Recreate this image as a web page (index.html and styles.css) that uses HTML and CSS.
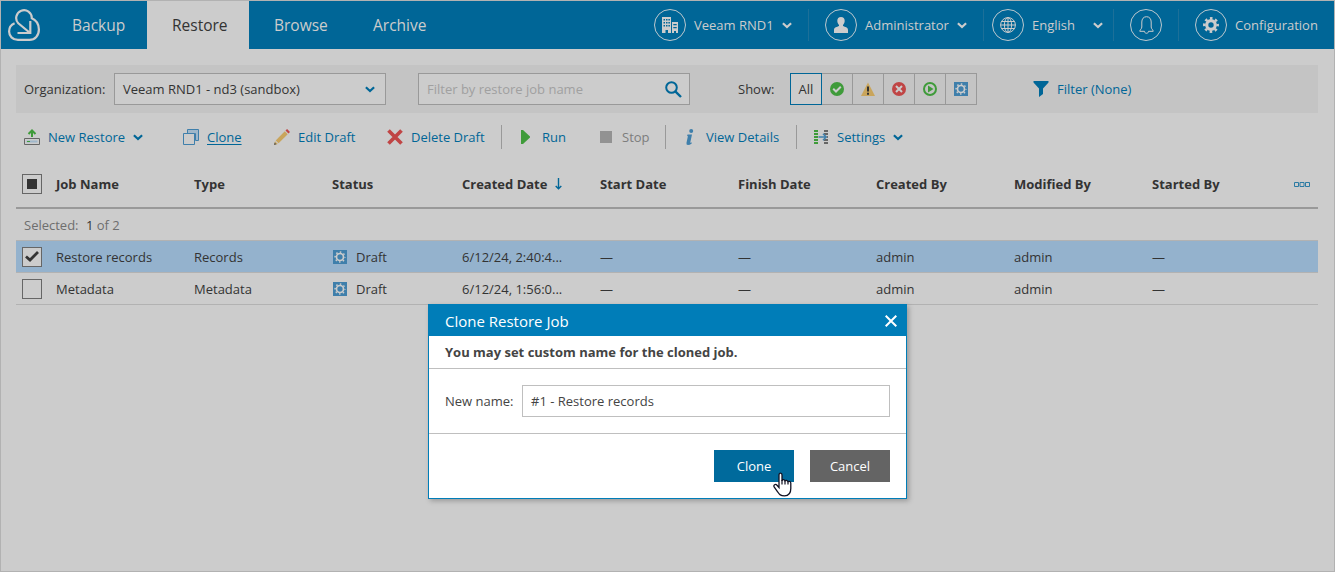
FILE: index.html
```html
<!DOCTYPE html>
<html lang="en">
<head>
  <meta charset="utf-8">
  <title>Restore</title>
  <link rel="stylesheet" href="styles.css">
</head>
<body>
  <svg class="sprite" width="0" height="0">
    <symbol id="chevron" viewBox="0 0 10 7"><path d="M0.9 1.2 L5 5 L9.1 1.2" fill="none" stroke="currentColor" stroke-width="2.2"/></symbol>
    <symbol id="draft" viewBox="0 0 14 14">
      <rect width="14" height="14" fill="#3f7fab"/>
      <circle cx="7" cy="7" r="4.9" fill="none" stroke="#ccc" stroke-width="1.5" stroke-dasharray="1.5 2.348" stroke-dashoffset="0.75"/>
      <circle cx="7" cy="7" r="3.5" fill="none" stroke="#ccc" stroke-width="1.7"/>
    </symbol>
  </svg>

  <header class="header">
    <svg class="logo" width="32" height="32" viewBox="0 0 32 32" fill="none" stroke="#ccc" stroke-width="2.2">
      <path d="M21.5 23.500 L10.300 14.300 A7.800 7.800 0 1 1 23.800 9.200 C28 11 30.900 15.500 30.900 20.500 C30.900 26.500 27 30.900 21.500 30.900 H10 C4.500 30.900 1.100 27 1.100 22.500 C1.100 19 3 15.800 6.600 14.300"/>
      <path d="M22.300 12 V24 H9.500"/>
    </svg>
    <nav class="nav">
      <a class="tab">Backup</a>
      <a class="tab active">Restore</a>
      <a class="tab browse">Browse</a>
      <a class="tab">Archive</a>
    </nav>
    <div class="menu">
      <div class="menu-item org">
        <span class="circle"><svg width="16" height="17" viewBox="0 0 16 17">
          <path d="M0 0H9V16H6V13H3.5V16H0Z M10 5H16V16H14V14H12V16H10Z" fill="#ccc"/>
          <path d="M1.5 2h1.5v1.6H1.5z M4 2h1.5v1.6H4z M6.4 2h1.5v1.6H6.4z M1.5 5h1.5v1.6H1.5z M4 5h1.5v1.6H4z M6.4 5h1.5v1.6H6.4z M1.5 8h1.5v1.6H1.5z M4 8h1.5v1.6H4z M6.4 8h1.5v1.6H6.4z M11.3 7h3.4v1.2h-3.4z M11.3 10h3.4v1.2h-3.4z" fill="#006697"/>
        </svg></span>
        <span class="menu-text">Veeam RND1</span>
        <svg class="chev" width="10" height="7"><use href="#chevron"/></svg>
      </div>
      <div class="menu-item user">
        <span class="circle"><svg width="14" height="16" viewBox="0 0 14 16"><path d="M7 0C9.4 0 10.7 1.6 10.7 3.8C10.7 5.8 9.7 7.2 9 8V9C11 10 14 10 14 13V16H0V13C0 10 3 10 5 9V8C4.300 7.200 3.300 5.800 3.300 3.800C3.300 1.600 4.600 0 7 0Z" fill="#ccc"/></svg></span>
        <span class="menu-text">Administrator</span>
        <svg class="chev" width="10" height="7"><use href="#chevron"/></svg>
      </div>
      <div class="menu-item lang">
        <span class="circle"><svg width="16" height="16" viewBox="0 0 16 16" fill="none" stroke="#ccc"><circle cx="8" cy="8" r="7.400"/><ellipse cx="8" cy="8" rx="3.600" ry="7.400"/><path d="M8 0.500V15.500M0.500 8H15.500M1.600 4.500H14.400M1.600 11.500H14.400"/></svg></span>
        <span class="menu-text">English</span>
        <svg class="chev" width="10" height="7"><use href="#chevron"/></svg>
      </div>
      <div class="menu-item bell">
        <span class="circle"><svg width="15" height="18" viewBox="0 0 15 18" fill="none" stroke="#ccc"><path d="M7.500 0.700C4.500 0.700 2.800 3 2.800 6V11C2.800 13 0.800 13.600 0.800 15.300H5.500C5.700 16.800 6.500 17.300 7.500 17.300S9.300 16.800 9.500 15.300H14.200C14.200 13.600 12.200 13 12.200 11V6C12.200 3 10.500 0.700 7.500 0.700Z"/></svg></span>
      </div>
      <div class="menu-item config">
        <span class="circle"><svg width="16" height="16" viewBox="0 0 16 16" fill="none" stroke="#ccc"><circle cx="8" cy="8" r="4.300" stroke-width="3.200"/><circle cx="8" cy="8" r="6.700" stroke-width="2.500" stroke-dasharray="2.600 2.662" stroke-dashoffset="1.300"/></svg></span>
        <span class="menu-text">Configuration</span>
      </div>
    </div>
  </header>

  <main class="content">
    <div class="filters">
      <label class="org-label">Organization:</label>
      <div class="select"><span>Veeam RND1 - nd3 (sandbox)</span><svg width="10" height="7"><use href="#chevron"/></svg></div>
      <div class="search"><span>Filter by restore job name</span>
        <svg width="17" height="17" viewBox="0 0 17 17" fill="none" stroke="#006697" stroke-width="2"><circle cx="6.500" cy="6.500" r="5.300"/><path d="M10.300 10.300L16 16" stroke-width="2.400"/></svg>
      </div>
      <span class="show-label">Show:</span>
      <div class="statuses">
        <span class="status all">All</span>
        <span class="status"><svg width="14" height="14" viewBox="0 0 14 14"><circle cx="7" cy="7" r="7" fill="#3f9b3a"/><path d="M3.200 6.800L6 9.500L10.800 4.800" fill="none" stroke="#ccc" stroke-width="2"/></svg></span>
        <span class="status"><svg width="14" height="14" viewBox="0 0 14 14"><path d="M7 0.500L14 14H0Z" fill="#c9a55c"/><path d="M7 4.500V9.500M7 10.700V12.700" stroke="#333" stroke-width="2"/></svg></span>
        <span class="status"><svg width="14" height="14" viewBox="0 0 14 14"><circle cx="7" cy="7" r="7" fill="#c04545"/><path d="M4 4L10 10M10 4L4 10" stroke="#ccc" stroke-width="2"/></svg></span>
        <span class="status"><svg width="14" height="14" viewBox="0 0 14 14"><circle cx="7" cy="7" r="6" fill="none" stroke="#3f9b3a" stroke-width="2"/><path d="M5 3.500L10.500 7L5 10.500Z" fill="#3f9b3a"/></svg></span>
        <span class="status"><svg width="14" height="14"><use href="#draft"/></svg></span>
      </div>
      <a class="filter-link"><svg width="16" height="16" viewBox="0 0 16 16"><path d="M0.500 0H15.500V1.500L10 7.500V13L6 16V7.500L0.500 1.500Z" fill="#006697"/></svg>Filter (None)</a>
    </div>

    <div class="toolbar">
      <a class="tool new-restore"><span class="ico"><svg width="16" height="16" viewBox="0 0 16 16"><path d="M0.500 9.500H15.500V15.500H0.500Z" fill="#ccc" stroke="#666"/><path d="M2.500 11.500H13.500V13.500H2.500Z" fill="#9fb7ca"/><path d="M3 12.500H6" stroke="#3f9b3a"/><path d="M8 8V2M4.500 5L8 1.500L11.500 5" fill="none" stroke="#3f9b3a" stroke-width="2"/></svg></span>New Restore<svg class="arrow" width="10" height="7"><use href="#chevron"/></svg></a>
      <a class="tool clone"><span class="ico"><svg width="16" height="16" viewBox="0 0 16 16" fill="none"><path d="M4.500 0.500H15.500V11.500H12.500V4.500H4.500Z" fill="#9fb7ca" stroke="#3f7fab"/><path d="M0.500 4.500H11.500V15.500H0.500Z" fill="#ccc" stroke="#3f7fab"/></svg></span><span class="underline">Clone</span></a>
      <a class="tool edit"><span class="ico"><svg width="16" height="16" viewBox="0 0 16 16"><path d="M10.800 2.300L13.700 5.200L4.600 14.300L1.700 11.400Z" fill="#c9a55c"/><path d="M11.500 1.600L13.100 0L16 2.900L14.400 4.500Z" fill="#c04545"/><path d="M1 12.200L3.800 15L0 16Z" fill="#c9a55c"/><path d="M0.600 13.500L2.500 15.300L0 16Z" fill="#555"/></svg></span>Edit Draft</a>
      <a class="tool delete"><span class="ico"><svg width="16" height="16" viewBox="0 0 16 16"><path d="M1.500 1.500L14.500 14.500M14.500 1.500L1.500 14.500" stroke="#c04545" stroke-width="3.700"/></svg></span>Delete Draft</a>
      <a class="tool run"><span class="ico"><svg width="16" height="16" viewBox="0 0 16 16"><path d="M3 1H5L12 7.500V8.500L5 15H3Z" fill="#3f9b3a"/></svg></span>Run</a>
      <a class="tool stop"><span class="ico"><svg width="16" height="16" viewBox="0 0 16 16"><path d="M2 2H14V14H2Z" fill="#929292"/></svg></span>Stop</a>
      <a class="tool details"><span class="ico"><svg width="16" height="16" viewBox="0 0 16 16" fill="#3f7fab"><circle cx="9.200" cy="2" r="2"/><path d="M5.500 5.500H10L8.300 13.300Q8.300 14.300 10 13.300L9.700 14.400Q7.800 16 5.900 16Q4 16 4.500 13.800L5.900 7.300L5.100 6.900Z"/></svg></span>View Details</a>
      <a class="tool settings"><span class="ico"><svg width="16" height="16" viewBox="0 0 16 16" fill="none"><path d="M3 1V15.500" stroke="#3f9b3a" stroke-width="4" stroke-dasharray="2 1"/><path d="M13 1V15.500" stroke="#666" stroke-width="4" stroke-dasharray="2 1"/><path d="M6 5H10.500L14.500 8L10.500 11H6Z" fill="#ccc"/><path d="M5.500 8H13M10 4.800L13.200 8L10 11.200" stroke="#3f7fab" stroke-width="1.500"/></svg></span>Settings<svg class="arrow" width="10" height="7"><use href="#chevron"/></svg></a>
    </div>

    <div class="grid">
      <div class="row head">
        <span class="check-cell"><span class="checkbox"><i class="partial"></i></span></span>
        <span>Job Name</span><span>Type</span><span>Status</span>
        <span>Created Date<svg class="sort" width="7" height="12" viewBox="0 0 7 12" fill="none" stroke="#006697" stroke-width="1.400"><path d="M3.500 0V10.500M0.700 7.900L3.500 10.700L6.300 7.900"/></svg></span>
        <span>Start Date</span><span>Finish Date</span><span>Created By</span><span>Modified By</span><span>Started By</span>
        <svg class="columns" width="16" height="5" viewBox="0 0 16 5" fill="none" stroke="#2c7ba3"><path d="M0.500 0.500H4.500V4.500H0.500ZM6 0.500H10V4.500H6ZM11.500 0.500H15.500V4.500H11.500Z"/></svg>
      </div>
      <div class="selected-count">Selected: <b>1</b> of 2</div>
      <div class="row selected">
        <span class="check-cell"><span class="checkbox"><svg width="14" height="11" viewBox="0 0 14 11"><path d="M1 5.500L5 9L13 1" fill="none" stroke="#333" stroke-width="2.800"/></svg></span></span>
        <span>Restore records</span><span>Records</span>
        <span><svg class="draft" width="14" height="14"><use href="#draft"/></svg>Draft</span>
        <span>6/12/24, 2:40:4...</span><span>—</span><span>—</span><span>admin</span><span>admin</span><span>—</span>
      </div>
      <div class="row">
        <span class="check-cell"><span class="checkbox"></span></span>
        <span>Metadata</span><span>Metadata</span>
        <span><svg class="draft" width="14" height="14"><use href="#draft"/></svg>Draft</span>
        <span>6/12/24, 1:56:0...</span><span>—</span><span>—</span><span>admin</span><span>admin</span><span>—</span>
      </div>
    </div>
  </main>

  <div class="dialog">
    <div class="dialog-header">Clone Restore Job
      <svg width="12" height="12" viewBox="0 0 12 12"><path d="M0.700 0.700L11.300 11.300M11.300 0.700L0.700 11.300" stroke="#fff" stroke-width="2"/></svg>
    </div>
    <div class="dialog-hint">You may set custom name for the cloned job.</div>
    <div class="dialog-body">
      <label>New name:</label>
      <div class="name-input">#1 - Restore records</div>
    </div>
    <div class="dialog-footer">
      <div class="button primary">Clone</div>
      <div class="button">Cancel</div>
    </div>
  </div>
  <svg class="cursor" width="19" height="25" viewBox="0 0 19 25"><path d="M6 15.500V3C6 0.500 9 0.500 9 3V9C9 7 12 7.200 12 9.500C12 7.700 15 8 15 10.300C15 8.800 17.800 9 17.800 11V16.500C17.800 21 15.500 23.800 11.500 23.800C7.500 23.800 6.500 22.500 4.800 20L1.300 15.200C0 13 2.500 11.500 4 13.200Z" fill="#fff" stroke="#111122" stroke-width="1.300"/><path d="M9 8V12.500M12 9V12.500M15 10V12.500" stroke="#111122" stroke-width="1.200"/></svg>
</body>
</html>
```
FILE: styles.css
```css
* {
    box-sizing: border-box;
}

body {
    margin: 0;
    height: 572px;
    overflow: hidden;
    border: 1px solid #b2b2b2;
    background: #ccc;
    color: #333;
    font-family: "Open Sans", sans-serif;
    font-size: 13px;
    line-height: 18px;
}

svg {
    display: block;
    flex: none;
}

.sprite {
    position: absolute;
}

/* header */
.header {
    display: flex;
    align-items: center;
    height: 48px;
    padding-left: 7px;
    background: #006697;
    color: #ccc;
}

.nav {
    display: flex;
    height: 48px;
    margin-left: 7px;
}

.tab {
    padding: 0 25px;
    font-size: 15.5px;
    line-height: 48px;
}

.tab.active {
    width: 102px;
    background: #ccc;
    color: #333;
}

.tab:first-child {
    width: 100px;
}

.tab.browse {
    width: 99px;
}

.menu {
    display: flex;
    margin-left: auto;
}

.menu-item {
    display: flex;
    align-items: center;
    height: 32px;
    padding-left: 16px;
    border-left: 1px solid #1c7099;
}

.menu-item.org {
    width: 155px;
    padding-left: 1px;
    border-left: 0;
}

.menu-item.user {
    width: 175px;
}

.menu-item.lang {
    width: 130px;
    padding-left: 8px;
}

.menu-item.bell {
    width: 65px;
}

.menu-item.config {
    width: 156px;
}

.circle {
    display: flex;
    align-items: center;
    justify-content: center;
    flex: none;
    width: 32px;
    height: 32px;
    margin-right: 8px;
    border: 1px solid #bcc8ce;
    border-radius: 50%;
}

.chev {
    margin: 0 16px 0 auto;
}

.lang .chev {
    margin-right: 10px;
}

/* filter bar */
.content {
    padding: 16px 16px 0 15px;
}

.filters {
    display: flex;
    align-items: center;
    height: 48px;
    padding-left: 8px;
    background: #c4c4c4;
}

.org-label {
    width: 90px;
}

.select,
.search {
    display: flex;
    align-items: center;
    justify-content: space-between;
    width: 272px;
    height: 32px;
    padding: 0 10px 0 8px;
    border: 1px solid #999;
    background: #ccc;
}

.select svg {
    color: #006697;
}

.search {
    margin-left: 32px;
    padding-right: 7px;
    color: #a0a0a0;
}

.show-label {
    width: 52px;
    margin-left: 48px;
}

.statuses {
    display: flex;
}

.status {
    display: flex;
    align-items: center;
    justify-content: center;
    width: 31px;
    height: 32px;
    border: 1px solid #999;
    border-left: 0;
}

.status.all {
    width: 32px;
    border: 1px solid #006697;
    background: #ccc;
}

.filter-link {
    display: flex;
    align-items: center;
    gap: 8px;
    margin-left: 56px;
    color: #006697;
}

/* toolbar */
.toolbar {
    display: flex;
    align-items: center;
    height: 48px;
    padding-left: 8px;
    color: #006697;
}

.tool {
    display: flex;
    align-items: center;
    flex: none;
    height: 24px;
    white-space: nowrap;
}

.ico {
    margin-right: 8px;
}

.arrow {
    margin-left: 8px;
}

.new-restore {
    width: 159px;
}

.clone {
    width: 91px;
}

.underline {
    text-decoration: underline;
    text-underline-offset: 2px;
}

.edit {
    width: 113px;
}

.delete {
    width: 115px;
    border-right: 1px solid #999;
}

.run {
    width: 96px;
    padding-left: 16px;
}

.stop {
    width: 68px;
    border-right: 1px solid #999;
    color: #7d7d7d;
}

.details {
    width: 131px;
    padding-left: 16px;
    border-right: 1px solid #999;
}

.settings {
    padding-left: 16px;
}

/* jobs grid */
.row {
    display: grid;
    grid-template-columns: 40px 138px 138px 130px 138px 138px 138px 138px 138px 138px 28px;
    align-items: center;
    height: 32px;
    border-bottom: 1px solid #b2b2b2;
}

.row > span {
    display: flex;
    align-items: center;
    white-space: nowrap;
}

.row.head {
    height: 48px;
    border-bottom: 2px solid #999;
    font-weight: bold;
}

.row.selected {
    background: #94b2cd;
}

.row .check-cell {
    padding-left: 6px;
}

.checkbox {
    display: flex;
    align-items: center;
    justify-content: center;
    width: 20px;
    height: 20px;
    border: 1px solid #666;
    background: #ccc;
}

.partial {
    width: 10px;
    height: 10px;
    background: #333;
}

.sort {
    margin-left: 8px;
}

.columns {
    margin-left: 4px;
}

.selected-count {
    height: 32px;
    padding-left: 8px;
    border-bottom: 1px solid #b2b2b2;
    color: #6e6e6e;
    line-height: 32px;
}

.selected-count b {
    margin-left: 4px;
    color: #333;
    font-weight: normal;
}

.draft {
    margin: 0 9px 0 1px;
}

/* clone dialog */
.dialog {
    position: absolute;
    left: 428px;
    top: 304px;
    width: 479px;
    height: 195px;
    border: 1px solid #007db8;
    background: #fff;
    box-shadow: 2px 2px 5px rgba(0, 0, 0, 0.25);
    color: #444;
}

.dialog-header {
    display: flex;
    align-items: center;
    justify-content: space-between;
    height: 31px;
    padding: 0 9px 0 16px;
    background: #007db8;
    color: #fff;
    font-size: 15px;
}

.dialog-hint {
    height: 33px;
    padding-left: 16px;
    border-bottom: 1px solid #bfbfbf;
    font-weight: bold;
    line-height: 32px;
}

.dialog-body {
    display: flex;
    align-items: center;
    height: 65px;
    padding: 0 16px;
    border-bottom: 1px solid #bfbfbf;
}

.dialog-body label {
    width: 77px;
}

.name-input {
    flex: 1;
    height: 32px;
    padding-left: 8px;
    border: 1px solid #bfbfbf;
    line-height: 30px;
}

.dialog-footer {
    display: flex;
    justify-content: flex-end;
    gap: 16px;
    padding: 16px;
}

.button {
    width: 80px;
    height: 32px;
    background: #646464;
    color: #fff;
    line-height: 32px;
    text-align: center;
}

.button.primary {
    background: #006a9c;
}

.cursor {
    position: absolute;
    left: 773px;
    top: 472px;
}
```
